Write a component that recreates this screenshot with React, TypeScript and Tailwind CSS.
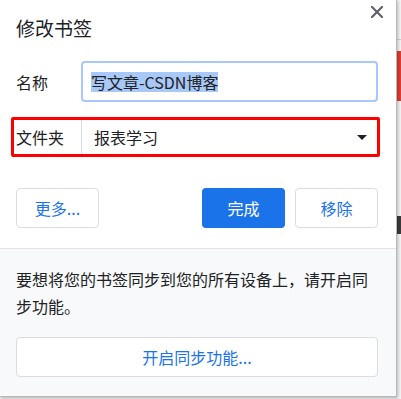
const FONT = "font-['Noto_Sans_CJK_SC','Noto_Sans',sans-serif]";

function CloseIcon() {
  return (
    <svg width="12" height="12" viewBox="0 0 12 12" aria-hidden="true">
      <path d="M1 1 L11 11 M11 1 L1 11" stroke="#5f6368" strokeWidth="2.2" strokeLinecap="square" />
    </svg>
  );
}

function Caret() {
  return (
    <svg width="10" height="5" viewBox="0 0 10 5" aria-hidden="true">
      <path d="M0 0 H10 L5 5 Z" fill="#202124" />
    </svg>
  );
}

export default function App() {
  return (
    <div className={`flex w-[401px] h-[399px] overflow-hidden bg-[#ededed] ${FONT}`}>
      <div className="relative flex flex-col w-[397px] h-[397px] shrink-0 bg-white border-r border-b border-[#b9b9b9] shadow-[1px_1px_3px_rgba(0,0,0,0.25)]">
        <button type="button" className="absolute top-[6px] right-[13px]">
          <CloseIcon />
        </button>

        <div className="pt-[14px] pl-4 text-[19px] leading-[28px] text-[#202124]">修改书签</div>

        {/* name */}
        <div className="flex items-center mt-[19px] pl-4 pr-[18px]">
          <span className="w-[65px] text-[16px] text-[#202124]">名称</span>
          <div className="flex items-center flex-1 h-[41px] border-2 border-[#a8c7fa] rounded-[4px] pl-2">
            <span className="bg-[#a8c8f8] text-[16px] leading-[20px] text-[#202124]">写文章-CSDN博客</span>
          </div>
        </div>

        {/* folder, with the red highlight box around it */}
        <div className="flex items-stretch mt-[15px] ml-[11px] w-[369px] h-[40px] border-[3px] border-[#ff0000] rounded-[2px]">
          <span className="flex items-center w-[67px] pl-[2px] text-[16px] text-[#202124]">文件夹</span>
          <div className="flex items-center justify-between flex-1 border-l border-[#dadce0] pl-3 pr-[10px]">
            <span className="text-[16px] text-[#202124]">报表学习</span>
            <Caret />
          </div>
        </div>

        {/* actions */}
        <div className="flex items-center mt-[31px] pl-4 pr-[18px]">
          <button type="button" className="w-[83px] h-[40px] border border-[#dadce0] rounded-[4px] text-[16px] text-[#1a73e8]">
            更多...
          </button>
          <div className="flex-1" />
          <button type="button" className="w-[83px] h-[40px] rounded-[4px] bg-[#1a73e8] text-[16px] text-white">
            完成
          </button>
          <button type="button" className="ml-[10px] w-[83px] h-[40px] border border-[#dadce0] rounded-[4px] text-[16px] text-[#1a73e8]">
            移除
          </button>
        </div>

        <div className="flex flex-col flex-1 mt-[20px] border-t border-[#e3e3e3] bg-[#f8f9fa] pt-[17px] pl-4 pr-[18px]">
          <p className="text-[16px] leading-[27px] text-[#202124]">
            要想将您的书签同步到您的所有设备上，请开启同步功能。
          </p>
          <button type="button" className="mt-[17px] h-[40px] bg-white border border-[#dadce0] rounded-[4px] text-[16px] text-[#1a73e8]">
            开启同步功能...
          </button>
        </div>
      </div>

      {/* sliver of the page behind the bubble */}
      <div className="flex flex-col w-[4px] bg-[#f3f3f3]">
        <div className="h-[39px]" />
        <div className="h-px bg-[#cfcfcf]" />
        <div className="h-[11px]" />
        <div className="h-[50px] bg-[#df3b30]" />
        <div className="h-[115px]" />
        <div className="h-[18px] bg-[#3a3a3a]" />
      </div>
    </div>
  );
}
